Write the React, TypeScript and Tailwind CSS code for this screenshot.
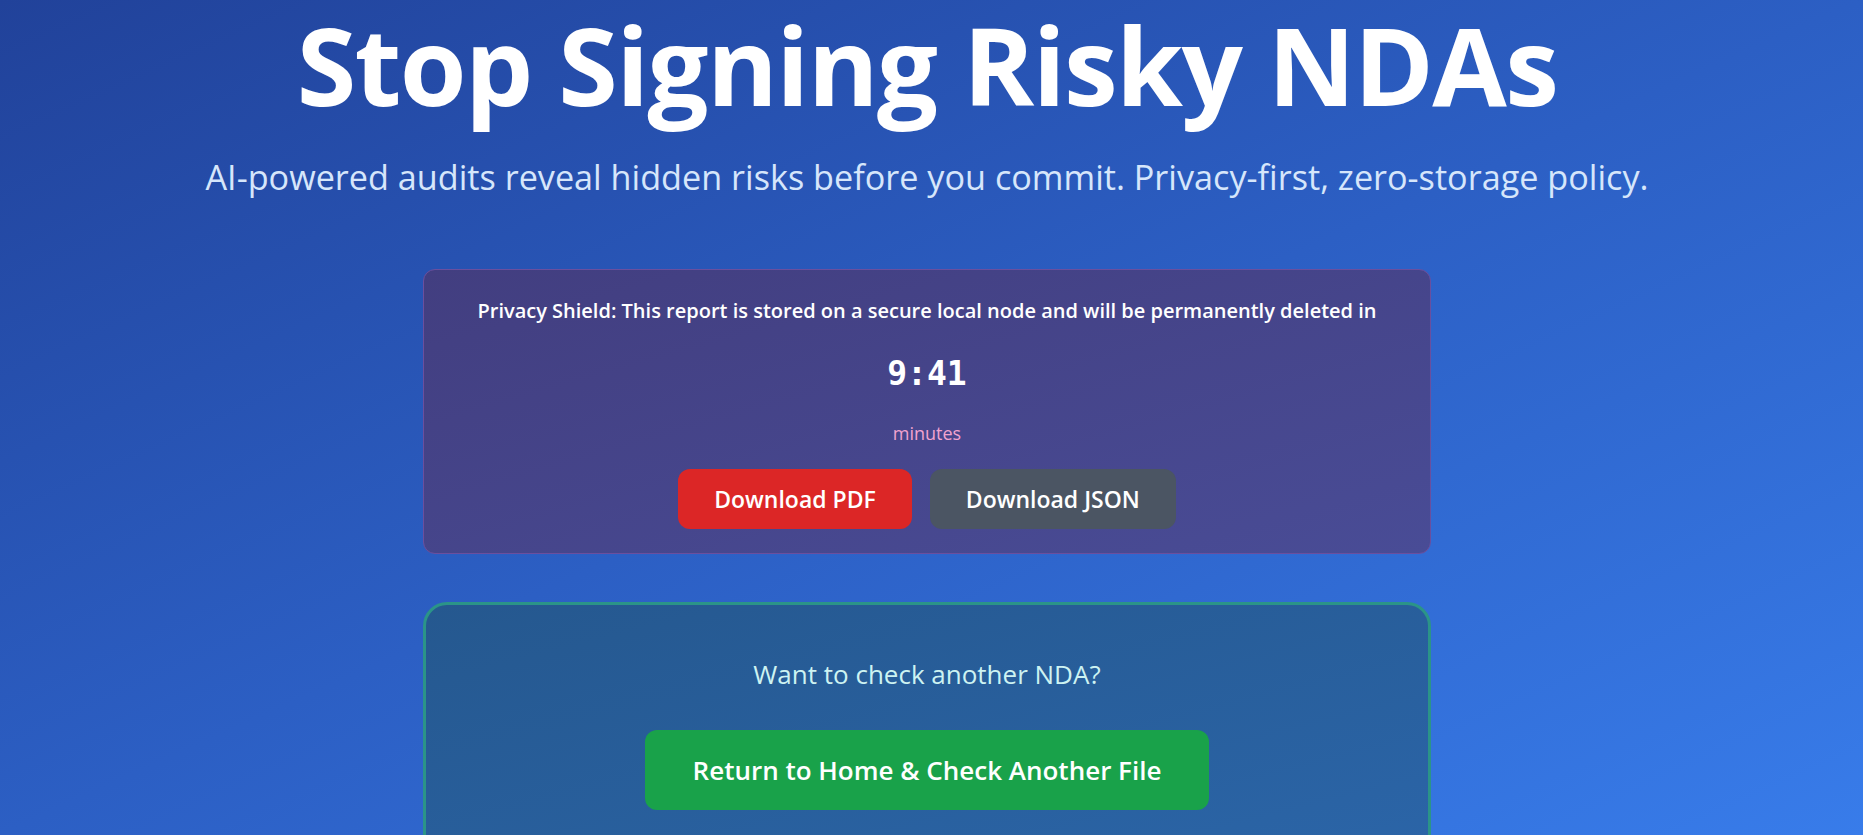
import React from "react";

const sans = "font-['Open_Sans','Noto_Sans',sans-serif]";

const App = () => (
  <div
    className={`h-screen overflow-hidden bg-linear-to-br from-[#21429a] via-[#2c5fc4] to-[#387cea] ${sans}`}
  >
    <div className="flex flex-col items-center pt-[11px] pr-[9px]">
      <h1 className="text-[108px] leading-none font-bold tracking-[-1.6px] text-white">
        Stop Signing Risky NDAs
      </h1>
      <p className="mt-[37px] text-[34.2px] leading-[42px] text-[#d6e6fb]">
        AI-powered audits reveal hidden risks before you commit. Privacy-first,
        zero-storage policy.
      </p>

      <div className="mt-[71px] w-[1008px] rounded-[12px] border border-[#6b4f9e] bg-linear-to-br from-[#423e80] to-[#494c96] px-6 pt-[26px] pb-6 text-center">
        <p className="text-[20px] leading-[30px] font-semibold text-white">
          Privacy Shield: This report is stored on a secure local node and will
          be permanently deleted in
        </p>
        <p className="mt-[18px] font-['DejaVu_Sans_Mono',monospace] text-[33px] leading-[60px] font-bold text-white">
          9:41
        </p>
        <p className="mt-[17px] text-[18px] leading-[24px] text-[#f2a3cf]">
          minutes
        </p>
        <div className="mt-[24px] flex justify-center gap-[18px]">
          <button className="rounded-[12px] bg-[#dc2626] px-9 py-3 text-[23px] leading-[36px] font-semibold text-white">
            Download PDF
          </button>
          <button className="rounded-[12px] bg-[#4b5563] px-9 py-3 text-[23px] leading-[36px] font-semibold text-white">
            Download JSON
          </button>
        </div>
      </div>

      <div className="mt-[48px] w-[1008px] rounded-[24px] border-[3px] border-[#2b9488] bg-linear-to-br from-[#25588f] to-[#2b65a8] px-12 pt-12 pb-12 text-center">
        <p className="text-[26px] leading-[42px] text-[#cdf3f2]">
          Want to check another NDA?
        </p>
        <button className="mt-[35px] rounded-[12px] bg-[#19a24a] px-12 py-[19px] text-[26px] leading-[42px] font-semibold text-white">
          Return to Home &amp; Check Another File
        </button>
      </div>
    </div>
  </div>
);

export default App;
